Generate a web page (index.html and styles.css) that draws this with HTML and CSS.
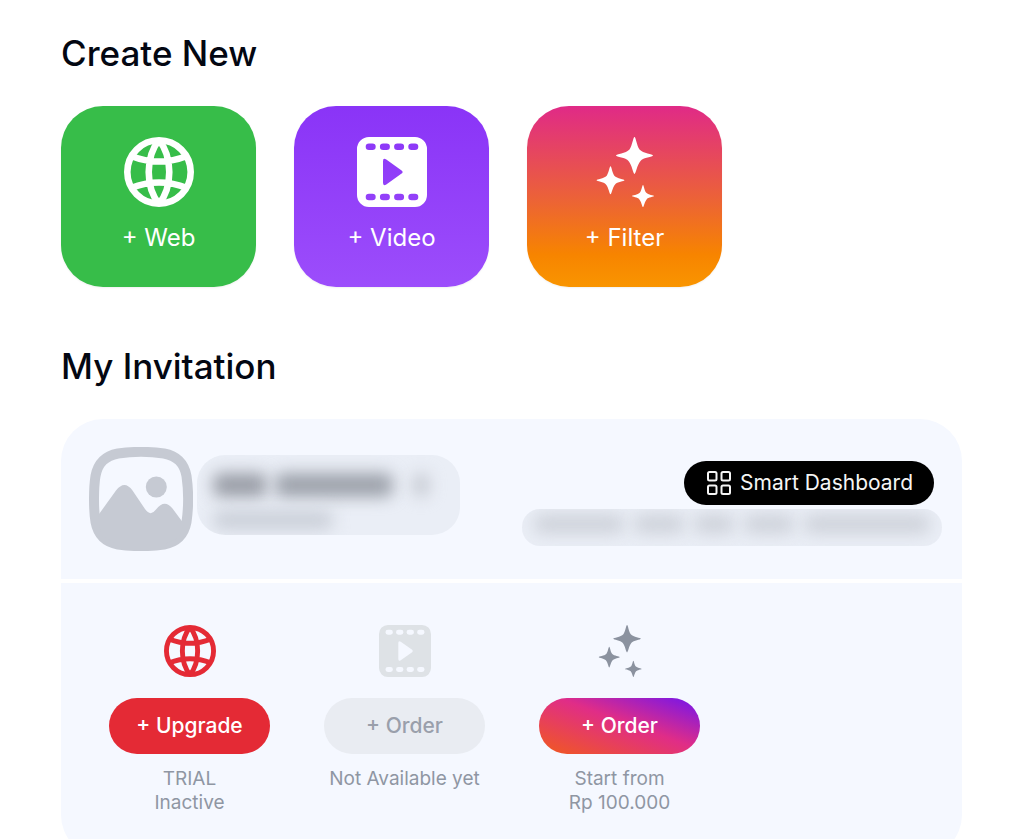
FILE: index.html
```html
<!DOCTYPE html>
<html lang="en">
<head>
<meta charset="utf-8">
<meta name="viewport" content="width=device-width, initial-scale=1">
<title>My Invitation</title>
<link rel="stylesheet" href="styles.css">
</head>
<body>
<svg class="sprite" aria-hidden="true">
  <symbol id="globe" viewBox="0 0 70 70">
    <g fill="none" stroke="currentColor" stroke-width="6.6">
      <circle cx="35" cy="35" r="31.700"/>
      <path d="M35 3C21.3 20 21.3 50 35 67M35 3C48.7 20 48.7 50 35 67M7 19Q35 30 63 19M7 51Q35 40 63 51"/>
    </g>
  </symbol>
  <symbol id="film" viewBox="0 0 70 70">
    <path fill="currentColor" fill-rule="evenodd" d="M12 0H58A12 12 0 0 1 70 12V58A12 12 0 0 1 58 70H12A12 12 0 0 1 0 58V12A12 12 0 0 1 12 0Z
      M12 6.5a3.3 3.3 0 0 0 0 6.6h3.4a3.3 3.3 0 0 0 0-6.6Z M26.2 6.5a3.3 3.3 0 0 0 0 6.6h3.4a3.3 3.3 0 0 0 0-6.6Z M40.4 6.5a3.3 3.3 0 0 0 0 6.6h3.4a3.3 3.3 0 0 0 0-6.6Z M54.6 6.5a3.3 3.3 0 0 0 0 6.6H58a3.3 3.3 0 0 0 0-6.6Z
      M12 56.7a3.3 3.3 0 0 0 0 6.6h3.4a3.3 3.3 0 0 0 0-6.6Z M26.2 56.7a3.3 3.3 0 0 0 0 6.6h3.4a3.3 3.3 0 0 0 0-6.6Z M40.4 56.7a3.3 3.3 0 0 0 0 6.6h3.4a3.3 3.3 0 0 0 0-6.6Z M54.6 56.7a3.3 3.3 0 0 0 0 6.6H58a3.3 3.3 0 0 0 0-6.6Z
      M26 24.2V45.800Q26 49.500 29.300 47.500L44.600 36.600Q46.600 35 44.600 33.400L29.300 22.500Q26 20.500 26 24.200Z"/>
  </symbol>
  <symbol id="sparkles" viewBox="0 0 70 70">
    <g fill="currentColor">
      <path id="spark" d="M44.500 0C45.800 0 46.500 8 49.500 12.500C53 16.500 63 17.200 63 18.500S53 20.500 50.500 24C47 28 45.800 37 44.500 37S42 28 38.500 24C36 20.500 26 19.800 26 18.500S36 16.500 39.500 12.500C42.500 8 43.200 0 44.500 0Z"/>
      <use href="#spark" transform="translate(-13.300 29.200) scale(.76)"/>
      <use href="#spark" transform="translate(26.300 48) scale(.6)"/>
    </g>
  </symbol>
</svg>

<main class="page">
  <section class="create">
    <h1 class="title">Create New</h1>
    <div class="tiles">
      <button class="tile tile-web" type="button"><svg class="tile-icon" aria-hidden="true"><use href="#globe"/></svg><span>+ Web</span></button>
      <button class="tile tile-video" type="button"><svg class="tile-icon" aria-hidden="true"><use href="#film"/></svg><span>+ Video</span></button>
      <button class="tile tile-filter" type="button"><svg class="tile-icon" aria-hidden="true"><use href="#sparkles"/></svg><span>+ Filter</span></button>
    </div>
  </section>

  <section class="invitations">
    <h2 class="title">My Invitation</h2>
    <article class="card">
      <header class="card-head">
        <svg class="thumb" viewBox="0 0 104 104" aria-hidden="true">
          <path fill="none" stroke="currentColor" stroke-width="10" d="M5 52C5 43 5.500 35 6.500 29C9 16 16 9 29 6.500C43 4.500 61 4.500 75 6.500C88 9 95 16 97.500 29C99.500 43 99.500 61 97.500 75C95 88 88 95 75 97.500C61 99.500 43 99.500 29 97.500C16 95 9 88 6.500 75C5.500 69 5 61 5 52Z"/>
          <circle cx="67.300" cy="40" r="10.500" fill="currentColor"/>
          <path fill="currentColor" d="M9 68.500L27 43.500Q35.500 32.500 43.500 43.500L56 62Q61.500 70 67 62.500Q75.500 51.500 83.500 61.500L95 77L90 90L75 98H29L12 88Z"/>
        </svg>
        <div class="veil veil-name" aria-hidden="true">
          <div class="veil-row"><i class="smudge smudge-a"></i><i class="smudge smudge-b"></i><i class="smudge smudge-c"></i></div>
          <div class="veil-row"><i class="smudge smudge-d"></i></div>
        </div>
        <div class="card-side">
          <a class="dashboard" href="#dashboard">
            <svg class="grid-icon" viewBox="0 0 24 24" aria-hidden="true"><g fill="none" stroke="currentColor" stroke-width="2"><rect x="1" y="1" width="8.500" height="8.500" rx="1.500"/><rect x="14.500" y="1" width="8.500" height="8.500" rx="1.500"/><rect x="1" y="14.500" width="8.500" height="8.500" rx="1.500"/><rect x="14.500" y="14.500" width="8.500" height="8.500" rx="1.500"/></g></svg>
            <span>Smart Dashboard</span>
          </a>
          <div class="veil veil-note" aria-hidden="true"><i class="smudge note-a"></i><i class="smudge note-b"></i><i class="smudge note-c"></i><i class="smudge note-d"></i><i class="smudge note-e"></i></div>
        </div>
      </header>
      <div class="products">
        <div class="product">
          <svg class="product-icon icon-red" aria-hidden="true"><use href="#globe"/></svg>
          <button class="pill pill-upgrade" type="button">+ Upgrade</button>
          <p class="status">TRIAL<br>Inactive</p>
        </div>
        <div class="product">
          <svg class="product-icon icon-muted" aria-hidden="true"><use href="#film"/></svg>
          <button class="pill pill-disabled" type="button" disabled>+ Order</button>
          <p class="status">Not Available yet</p>
        </div>
        <div class="product">
          <svg class="product-icon icon-grey" aria-hidden="true"><use href="#sparkles"/></svg>
          <button class="pill pill-order" type="button">+ Order</button>
          <p class="status">Start from<br>Rp 100.000</p>
        </div>
      </div>
    </article>
  </section>
</main>
</body>
</html>
```
FILE: styles.css
```css
* { box-sizing: border-box; }

body {
  margin: 0;
  height: 100vh;
  overflow: hidden;
  background: #fff;
  color: #030712;
  font-family: Inter, "Liberation Sans", sans-serif;
}

button { border: 0; padding: 0; font: inherit; cursor: pointer; }
.sprite { display: block; width: 0; height: 0; }

.page {
  display: flex;
  flex-direction: column;
  gap: 57px;
  padding: 31px 62px 32px 61px;
}

.title { margin: 0; font-size: 35px; line-height: 44px; font-weight: 500; }
.create, .invitations { display: flex; flex-direction: column; gap: 31px; }

.tiles { display: flex; flex-wrap: wrap; gap: 38px; }
.tile {
  display: flex;
  flex-direction: column;
  align-items: center;
  gap: 16px;
  width: 195px;
  height: 181px;
  padding-top: 31px;
  border-radius: 42px;
  color: #fff;
  font-size: 24px;
  line-height: 30px;
  box-shadow: 0 1px 2px rgba(0, 0, 0, .06);
}
.tile-icon { width: 70px; height: 70px; }
.tile-web { background: #37bd49; }
.tile-video { background: linear-gradient(#8a34f7, #9c4dfb); }
.tile-filter { background: linear-gradient(#e02a87, #ec6336 52%, #f78400 82%, #f99500); }

.card { display: flex; flex-direction: column; gap: 4px; }
.card-head, .products { background: #f5f8ff; }
.card-head {
  display: flex;
  align-items: flex-start;
  gap: 4px;
  padding: 28px 20px 28px 28px;
  border-radius: 42px 42px 0 0;
}
.thumb { flex: none; width: 104px; height: 104px; color: #c6cad3; }

.veil { overflow: hidden; background: #eaeef6; }
.smudge { flex: none; border-radius: 8px; filter: blur(8px); }
.veil-name {
  display: flex;
  flex-direction: column;
  gap: 13px;
  width: 263px;
  height: 80px;
  margin-top: 8px;
  padding: 18px 16px;
  border-radius: 28px;
}
.veil-row { display: flex; gap: 8px; }
.smudge-a { width: 54px; height: 24px; background: #9a9ea7; }
.smudge-b { width: 118px; height: 24px; background: #9da2ab; }
.smudge-c { width: 16px; height: 24px; margin-left: 12px; background: #c5c9d1; }
.smudge-d { width: 120px; height: 20px; background: #cbd0d9; }

.card-side {
  display: flex;
  flex-direction: column;
  align-items: flex-end;
  gap: 4px;
  margin: 14px 0 0 auto;
}
.dashboard {
  display: flex;
  align-items: center;
  gap: 9px;
  height: 44px;
  margin-right: 8px;
  padding: 0 21px 0 23px;
  border-radius: 22px;
  background: #000;
  color: #f5f5f5;
  font-size: 21px;
  line-height: 28px;
  text-decoration: none;
  white-space: nowrap;
}
.grid-icon { width: 24px; height: 24px; }
.veil-note {
  display: flex;
  gap: 10px;
  width: 420px;
  height: 37px;
  padding: 5px 12px;
  border-radius: 18px;
}
.veil-note .smudge { height: 20px; background: #cfd3db; }
.note-a { width: 90px; }
.note-b { width: 50px; }
.note-c { width: 40px; }
.note-d { width: 50px; }
.note-e { width: 126px; }

.products {
  display: flex;
  flex-wrap: wrap;
  gap: 54px;
  padding: 42px 48px;
  border-radius: 0 0 42px 42px;
}
.product { display: flex; flex-direction: column; align-items: center; width: 161px; }
.product-icon { width: 52px; height: 52px; }
.icon-red { color: #e42a35; }
.icon-muted { color: #dee2e6; }
.icon-grey { color: #8b929f; }
.pill {
  width: 100%;
  height: 56px;
  margin: 21px 0 13px;
  border-radius: 28px;
  color: #fff;
  font-size: 21px;
  line-height: 28px;
  font-weight: 500;
}
.pill-upgrade { background: #e42a35; }
.pill-disabled { background: #e9ecf2; color: #9a9fab; cursor: default; }
.pill-order { background: linear-gradient(20deg, #f15a1d, #e02d87 55%, #8519dc 92%); }
.status {
  margin: 0;
  color: #8f96a3;
  font-size: 19px;
  line-height: 24px;
  text-align: center;
  white-space: nowrap;
}
```
